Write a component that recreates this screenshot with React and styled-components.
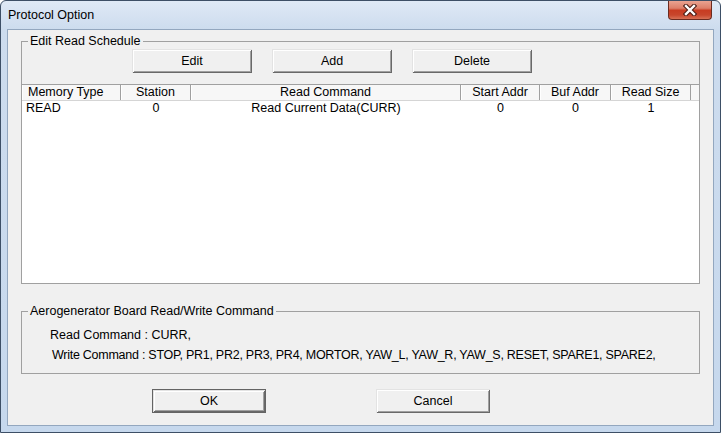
import styled, { createGlobalStyle } from 'styled-components';

const GlobalStyle = createGlobalStyle`
  html, body {
    margin: 0;
    padding: 0;
  }
  body {
    width: 721px;
    height: 433px;
    overflow: hidden;
    background: #fff;
    font-family: "Liberation Sans", Arial, sans-serif;
    font-size: 12.5px;
    color: #000;
  }
`;

const Window = styled.div`
  width: 721px;
  height: 433px;
  box-sizing: border-box;
  border: 1px solid #3d4f66;
  border-radius: 6px 6px 0 0;
  background: linear-gradient(to bottom, #dfe9f6 0px, #cddcee 28px, #c6d8ed 100%);
  display: flex;
  flex-direction: column;
  overflow: hidden;
`;

const TitleBar = styled.div`
  height: 28px;
  display: flex;
  align-items: flex-start;
  justify-content: space-between;
  padding: 0 8px 0 7px;
  flex-shrink: 0;
`;

const Title = styled.span`
  line-height: 28px;
`;

const CloseButton = styled.div`
  width: 44px;
  height: 19px;
  box-sizing: border-box;
  border: 1px solid #6b2b20;
  border-top: none;
  border-radius: 0 0 4px 4px;
  background: linear-gradient(to bottom, #eaa391 0%, #dd7f69 40%, #c83c22 52%, #c8462c 78%, #d87156 100%);
  display: flex;
  align-items: center;
  justify-content: center;
`;

const Client = styled.div`
  flex: 1;
  margin: 0 6px 6px;
  border: 1px solid #93a7bf;
  background: #f0f0f0;
  padding: 4px 13px 0;
  display: flex;
  flex-direction: column;
`;

const Group = styled.fieldset`
  margin: ${(p) => p.$top || 0}px 0 0;
  padding: ${(p) => p.$padTop || 0}px 0 ${(p) => p.$bottom || 0}px;
  border: 1px solid #a0a0a0;
  min-width: 0;
`;

const Legend = styled.legend`
  margin-left: 6px;
  padding: 0 2px;
  line-height: 14px;
`;

const ButtonRow = styled.div`
  display: flex;
  gap: ${(p) => p.$gap}px;
  padding-left: ${(p) => p.$indent}px;
  margin-top: ${(p) => p.$top || 0}px;
`;

const Button = styled.button`
  width: ${(p) => p.$width}px;
  height: 24px;
  padding: 0;
  margin: 0;
  font: inherit;
  color: #000;
  background: #f0f0f0;
  border: ${(p) => (p.$default ? '1px solid #646464' : 'none')};
  box-shadow: inset 1px 1px #e3e3e3, inset -1px -1px #696969, inset 2px 2px #fff,
    inset -2px -2px #a0a0a0;
`;

const List = styled.div`
  margin: 11px -1px -1px;
  height: 200px;
  box-sizing: border-box;
  border: 1px solid #a0a0a0;
  background: #fff;
`;

const Header = styled.div`
  display: flex;
  height: 15px;
  background: #f7f7f7;
  border-bottom: 1px solid #d5d5d5;
`;

const HeadCell = styled.div`
  width: ${(p) => p.$w}px;
  box-sizing: border-box;
  flex-shrink: 0;
  border-right: 1px solid #a0a0a0;
  box-shadow: inset 1px 0 #fff;
  line-height: 15px;
  text-align: ${(p) => (p.$left ? 'left' : 'center')};
  padding-left: ${(p) => (p.$left ? 6 : 0)}px;
  white-space: nowrap;
`;

const Row = styled.div`
  display: flex;
  height: 14px;
`;

const Cell = styled.div`
  width: ${(p) => p.$w}px;
  flex-shrink: 0;
  line-height: 14px;
  text-align: ${(p) => (p.$left ? 'left' : 'center')};
  padding-left: ${(p) => (p.$left ? 4 : 0)}px;
  box-sizing: border-box;
  white-space: nowrap;
`;

const InfoLine = styled.div`
  line-height: 20px;
  padding-left: ${(p) => p.$indent}px;
  letter-spacing: ${(p) => (p.$tight ? '-0.26px' : 'normal')};
  white-space: nowrap;
`;

const columns = [
  { title: 'Memory Type', width: 99, left: true },
  { title: 'Station', width: 70 },
  { title: 'Read Command', width: 270 },
  { title: 'Start Addr', width: 79 },
  { title: 'Buf Addr', width: 71 },
  { title: 'Read Size', width: 80 },
];

const rows = [['READ', '0', 'Read Current Data(CURR)', '0', '0', '1']];

function CloseIcon() {
  return (
    <svg width="16" height="12" viewBox="0 0 16 12">
      <path d="M4 2 L12 10 M12 2 L4 10" stroke="#4a1c14" strokeWidth="4.5" strokeLinecap="square" />
      <path d="M4 2 L12 10 M12 2 L4 10" stroke="#fff" strokeWidth="2.4" strokeLinecap="square" />
    </svg>
  );
}

function App() {
  return (
    <>
      <GlobalStyle />
      <Window>
        <TitleBar>
          <Title>Protocol Option</Title>
          <CloseButton>
            <CloseIcon />
          </CloseButton>
        </TitleBar>
        <Client>
          <Group>
            <Legend>Edit Read Schedule</Legend>
            <ButtonRow $gap={20} $indent={110} $top={1}>
              <Button $width={120}>Edit</Button>
              <Button $width={120}>Add</Button>
              <Button $width={120}>Delete</Button>
            </ButtonRow>
            <List>
              <Header>
                {columns.map((c) => (
                  <HeadCell key={c.title} $w={c.width} $left={c.left}>
                    {c.title}
                  </HeadCell>
                ))}
              </Header>
              {rows.map((r, i) => (
                <Row key={i}>
                  {r.map((v, j) => (
                    <Cell key={j} $w={columns[j].width} $left={columns[j].left}>
                      {v}
                    </Cell>
                  ))}
                </Row>
              ))}
            </List>
          </Group>
          <Group $top={20} $padTop={7} $bottom={8}>
            <Legend>Aerogenerator Board Read/Write Command</Legend>
            <InfoLine $indent={28}>Read Command : CURR,</InfoLine>
            <InfoLine $indent={30} $tight>
              Write Command : STOP, PR1, PR2, PR3, PR4, MORTOR, YAW_L, YAW_R, YAW_S, RESET, SPARE1,
              SPARE2,
            </InfoLine>
          </Group>
          <ButtonRow $gap={110} $indent={131} $top={15}>
            <Button $width={114} $default>
              OK
            </Button>
            <Button $width={114}>Cancel</Button>
          </ButtonRow>
        </Client>
      </Window>
    </>
  );
}

export default App;
